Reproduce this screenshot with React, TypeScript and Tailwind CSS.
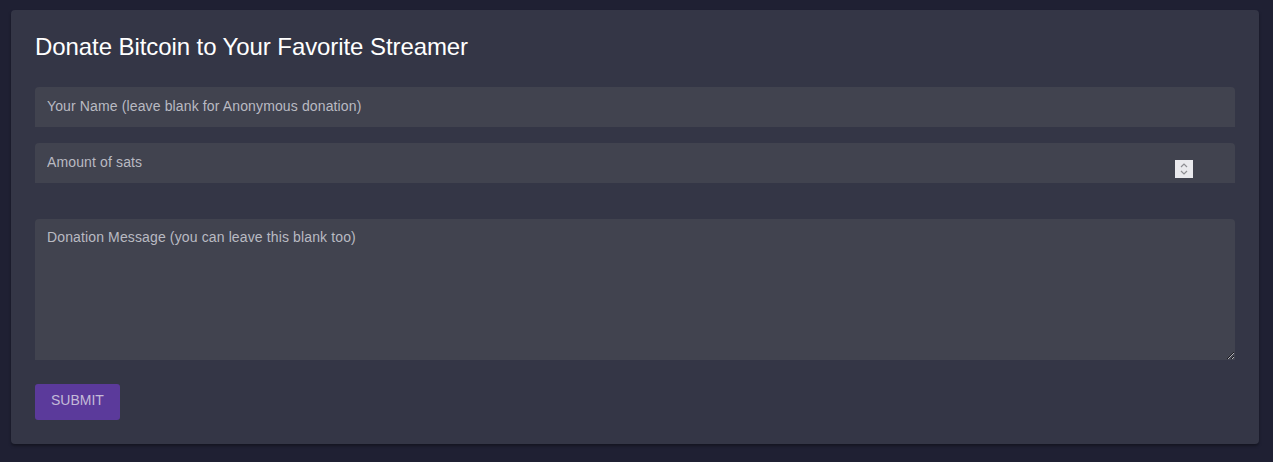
import React from "react";

export default function App() {
  return (
    <div
      className="min-h-[462px] w-full bg-[#1f2033] pl-[11px] pr-[14px] pt-[10px] pb-[18px]"
      style={{ fontFamily: '"Liberation Sans", Arial, sans-serif' }}
    >
      <div className="rounded-[4px] bg-[#343646] px-6 pt-[22px] pb-6 shadow-[0_2px_3px_rgba(0,0,0,0.35)]">
        <h1 className="text-[24px] leading-[30px] tracking-[-0.08px] text-white">
          Donate Bitcoin to Your Favorite Streamer
        </h1>
        <div className="mt-[25px] flex flex-col">
          <input
            type="text"
            placeholder="Your Name (leave blank for Anonymous donation)"
            className="h-10 w-full rounded-t-[4px] bg-[#41434f] px-3 pb-[3px] text-[14px] tracking-[0.00938em] text-[#b9bac2] outline-none placeholder:text-[#b9bac2]"
          />
          <div className="mt-4 flex h-10 w-full items-end rounded-t-[4px] bg-[#41434f]">
            <input
              type="text"
              placeholder="Amount of sats"
              className="h-10 flex-1 bg-transparent px-3 pb-[3px] text-[14px] tracking-[0.00938em] text-[#b9bac2] outline-none placeholder:text-[#b9bac2]"
            />
            <div className="mb-[5px] mr-[42px] flex h-[18px] w-[18px] flex-col items-center justify-center bg-[#e9e9ed]">
              <svg width="10" height="14" viewBox="0 0 10 14" fill="none" stroke="#8e8e93" strokeWidth="1.2">
                <path d="M2 5 L5 2 L8 5" />
                <path d="M2 9 L5 12 L8 9" />
              </svg>
            </div>
          </div>
          <textarea
            placeholder="Donation Message (you can leave this blank too)"
            className="mt-9 h-[141px] w-full resize-y rounded-t-[4px] bg-[#41434f] px-3 pt-[10px] text-[14px] leading-[17px] tracking-[0.00938em] text-[#b9bac2] outline-none placeholder:text-[#b9bac2]"
          />
        </div>
        <button className="mt-6 h-9 rounded-[3px] bg-[#5b3a9b] px-4 pb-1 text-[14px] uppercase text-[#c4bad8]">
          Submit
        </button>
      </div>
    </div>
  );
}
